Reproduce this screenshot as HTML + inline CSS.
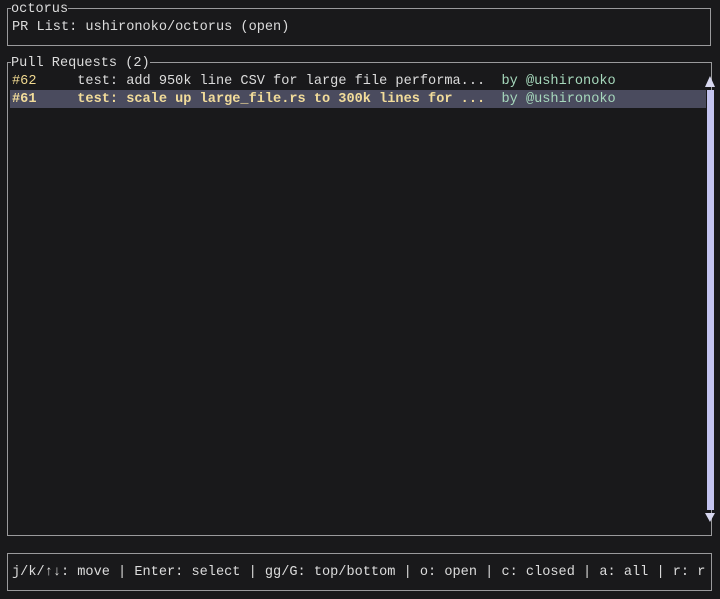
<!DOCTYPE html>
<html><head><meta charset="utf-8"><style>
html,body{margin:0;padding:0;background:#19191b;width:720px;height:599px;overflow:hidden}
body{position:relative;font-family:"Liberation Mono","DejaVu Sans Mono",monospace;font-size:13.6px;color:#dcdcdc}
.t{position:absolute;white-space:pre;line-height:18px}
.box{position:absolute;border:1px solid #9a9a9c}
.lab{position:absolute;background:#19191b;white-space:pre;line-height:18px}
</style></head><body>
<div class="box" style="left:7px;top:8px;width:702px;height:36px"></div>
<div class="lab" style="left:11px;top:1px">octorus</div>
<div class="t" style="left:12px;top:19px">PR List: ushironoko/octorus (open)</div>

<div class="box" style="left:7px;top:62px;width:703px;height:472px"></div>
<div class="lab" style="left:11px;top:55px">Pull Requests (2)</div>

<div style="position:absolute;left:10px;top:90px;width:696px;height:18px;background:#4a4b5e"></div>
<div class="t" style="left:12px;top:73px"><span style="color:#efd890">#62</span>     test: add 950k line CSV for large file performa...  <span style="color:#a6d8bc">by @ushironoko</span></div>
<div class="t" style="left:12px;top:91px;font-weight:bold;color:#f2dc9a">#61     test: scale up large_file.rs to 300k lines for ...  <span style="color:#a6d8bc;font-weight:normal">by @ushironoko</span></div>

<svg style="position:absolute;left:704px;top:74px" width="12" height="450">
<polygon points="6,2 11,13 1,13" fill="#d8d8f0"/>
<rect x="3" y="16" width="7" height="420" fill="#c4c4f0"/>
<polygon points="1,439 11,439 6,448" fill="#d8d8f0"/>
</svg>

<div class="box" style="left:7px;top:553px;width:703px;height:36px"></div>
<div class="t" style="left:12px;top:564px;font-size:13.6px;letter-spacing:0px">j/k/↑↓: move | Enter: select | gg/G: top/bottom | o: open | c: closed | a: all | r: r</div>
</body></html>
